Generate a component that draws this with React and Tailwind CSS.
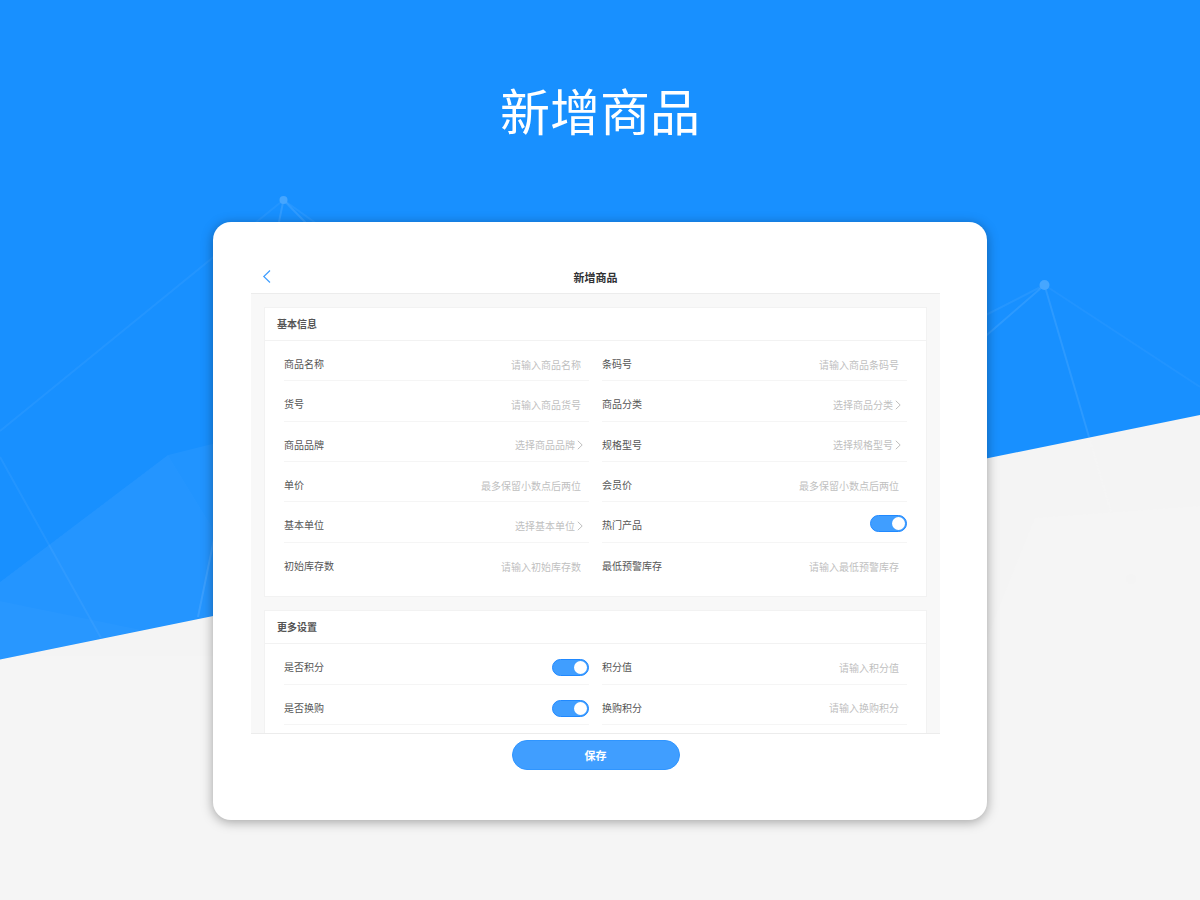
import { useState } from 'react';
import clsx from 'clsx';

const sections = [
  {
    title: '基本信息',
    gridClass: 'min-h-[242px]',
    className: 'pb-[13px] border-b',
    fields: [
      { id: 'name', label: '商品名称', type: 'input', hint: '请输入商品名称' },
      { id: 'barcode', label: '条码号', type: 'input', hint: '请输入商品条码号' },
      { id: 'sku', label: '货号', type: 'input', hint: '请输入商品货号' },
      { id: 'category', label: '商品分类', type: 'select', hint: '选择商品分类' },
      { id: 'brand', label: '商品品牌', type: 'select', hint: '选择商品品牌' },
      { id: 'spec', label: '规格型号', type: 'select', hint: '选择规格型号' },
      { id: 'price', label: '单价', type: 'input', hint: '最多保留小数点后两位' },
      { id: 'memberPrice', label: '会员价', type: 'input', hint: '最多保留小数点后两位' },
      { id: 'unit', label: '基本单位', type: 'select', hint: '选择基本单位' },
      { id: 'hot', label: '热门产品', type: 'switch' },
      { id: 'stock', label: '初始库存数', type: 'input', hint: '请输入初始库存数', last: true },
      { id: 'minStock', label: '最低预警库存', type: 'input', hint: '请输入最低预警库存', last: true },
    ],
  },
  {
    title: '更多设置',
    gridClass: 'min-h-[81px]',
    className: 'pb-2',
    fields: [
      { id: 'usePoints', label: '是否积分', type: 'switch', low: true },
      { id: 'points', label: '积分值', type: 'input', hint: '请输入积分值' },
      { id: 'useExchange', label: '是否换购', type: 'switch', low: true },
      { id: 'exchangePoints', label: '换购积分', type: 'input', hint: '请输入换购积分' },
    ],
  },
];

const Backdrop = () => (
  <svg
    className="absolute inset-0 -z-10 h-full w-full"
    viewBox="0 0 1200 900"
    preserveAspectRatio="none"
    aria-hidden="true"
  >
    <rect width="1200" height="900" fill="#f4f4f4" />
    <path d="M1010 580 1035 518 1200 506V900H0V656H980Z" fill="#f5f5f5" />
    <circle cx="1131" cy="579" r="5" fill="#f4f4f4" />
    <path d="M1089 437 1111 512" stroke="#f5f5f5" strokeWidth="2" />
    <path d="M0 0H1200V415L0 659.5Z" fill="#1890ff" />
    <path d="M0 582 168 455 300 422V598L0 659.5Z" fill="#fff" fillOpacity=".04" />
    <path d="M0 582 168 455 212 527V616L0 659.5Z" fill="#fff" fillOpacity=".015" />
    <path d="M0 601 142 630 0 659.5Z" fill="#fff" fillOpacity=".02" />
    <g stroke="#fff" strokeWidth="2" fill="none">
      <path d="M283.5 200 0 431M0 457 101 638" strokeOpacity=".05" />
      <path d="M283.5 200 198 617M283.5 200 307 224" strokeOpacity=".1" />
      <path d="M283.5 200 317 224M1044.5 285 980 318" strokeOpacity=".06" />
      <path d="M1044.5 285 1200 387" strokeOpacity=".04" />
      <path d="M1044.5 285 1089 437M1044.5 285 980 341" strokeOpacity=".09" />
    </g>
    <circle cx="283.5" cy="200" r="4" fill="#46a6ff" />
    <circle cx="1044.5" cy="285" r="5" fill="#46a6ff" />
  </svg>
);

const Switch = ({ id, low }) => {
  const [checked, setChecked] = useState(true);
  return (
    <input
      id={id}
      type="checkbox"
      role="switch"
      checked={checked}
      onChange={(e) => setChecked(e.target.checked)}
      className={clsx(
        'ml-auto flex h-[17px] w-[37px] shrink-0 appearance-none items-center rounded-full border border-gray-300 bg-gray-300 px-px',
        'before:h-[13px] before:w-[13px] before:rounded-full before:bg-white',
        'checked:justify-end checked:border-[#2089ff] checked:bg-[#409eff]',
        low ? 'mt-2' : 'mt-1'
      )}
    />
  );
};

const Field = ({ id, label, type, hint, last, low }) => (
  <div className={clsx('flex items-center', !last && 'border-b border-[#f5f5f5]')}>
    <label htmlFor={id} className="shrink-0 pt-[7px] leading-4 text-[#555]">
      {label}
    </label>
    {type === 'input' && (
      <input
        id={id}
        type="text"
        placeholder={hint}
        className="min-w-0 flex-1 pt-2 pr-2 text-right leading-4 outline-none placeholder:text-[#bfbfbf]"
      />
    )}
    {type === 'select' && (
      <>
        <select
          id={id}
          className="min-w-0 flex-1 appearance-none pt-2 leading-4 text-[#bfbfbf] outline-none [text-align-last:right]"
        >
          <option>{hint}</option>
        </select>
        <svg className="mt-2 mr-[6px] ml-[2px] h-[10px] w-[6px] shrink-0" viewBox="0 0 6 10" fill="none" stroke="#bfbfbf">
          <path d="M.8 .8 5.2 5 .8 9.2" />
        </svg>
      </>
    )}
    {type === 'switch' && <Switch id={id} low={low} />}
  </div>
);

const Section = ({ title, fields, gridClass, className }) => (
  <section className={clsx('border-x border-t border-[#f2f2f2] bg-white', className)}>
    <h3 className="border-b border-[#f2f2f2] px-3 py-2 leading-4 font-bold text-[#555]">{title}</h3>
    <div className={clsx('grid auto-rows-fr grid-cols-2 gap-x-[13px] px-[19px]', gridClass)}>
      {fields.map((field) => (
        <Field key={field.id} {...field} />
      ))}
    </div>
  </section>
);

export default function App() {
  return (
    <div className="relative isolate min-h-screen overflow-hidden pb-20 font-['Noto_Sans_CJK_SC','Liberation_Sans',sans-serif] text-[10px]">
      <Backdrop />
      <h1 className="pt-[79px] text-center text-[50px] leading-[60px] text-white">新增商品</h1>

      <main className="mx-auto mt-[83px] w-full max-w-[774px] rounded-[18px] bg-white pt-[38px] pr-[47px] pb-[50px] pl-[38px] shadow-[0_2px_12px_rgba(0,0,0,0.35)]">
        <header className="grid grid-cols-[1fr_auto_1fr] items-center border-b border-[#ececec] pt-[9px] pb-2">
          <button type="button" aria-label="返回" className="ml-[11px] h-4 w-4">
            <svg viewBox="0 0 16 16" className="h-4 w-4" fill="none" stroke="#409eff" strokeWidth="1.2">
              <path d="M8 1.5 1.8 7.5 8 13.5" />
            </svg>
          </button>
          <h2 className="text-[11px] leading-4 font-bold text-[#303133]">新增商品</h2>
        </header>

        <form onSubmit={(e) => e.preventDefault()}>
          <div className="flex flex-col gap-[13px] border-b border-[#ececec] bg-[#f8f8f8] px-[13px] pt-[13px]">
            {sections.map((section) => (
              <Section key={section.title} {...section} />
            ))}
          </div>
          <button
            type="submit"
            className="mx-auto mt-[6px] block h-[30px] w-[168px] rounded-full border border-[#2f95ff] bg-[#409eff] text-[11px] font-bold text-white"
          >
            保存
          </button>
        </form>
      </main>
    </div>
  );
}
